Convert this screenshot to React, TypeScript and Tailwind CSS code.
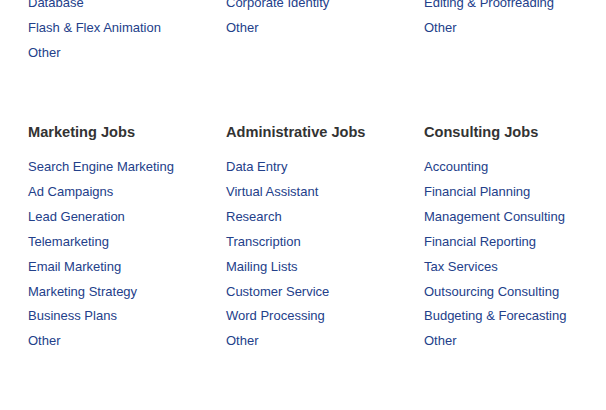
import React from "react";

const top = [
  ["Database", "Flash & Flex Animation", "Other"],
  ["Corporate Identity", "Other"],
  ["Editing & Proofreading", "Other"],
];

const sections = [
  {
    title: "Marketing Jobs",
    items: ["Search Engine Marketing", "Ad Campaigns", "Lead Generation", "Telemarketing", "Email Marketing", "Marketing Strategy", "Business Plans", "Other"],
  },
  {
    title: "Administrative Jobs",
    items: ["Data Entry", "Virtual Assistant", "Research", "Transcription", "Mailing Lists", "Customer Service", "Word Processing", "Other"],
  },
  {
    title: "Consulting Jobs",
    items: ["Accounting", "Financial Planning", "Management Consulting", "Financial Reporting", "Tax Services", "Outsourcing Consulting", "Budgeting & Forecasting", "Other"],
  },
];

export default function App() {
  return (
    <div className="w-[606px] h-[410px] overflow-hidden bg-white pl-[28px]" style={{ fontFamily: '"Liberation Sans", Arial, sans-serif' }}>
      <div className="grid grid-cols-[198px_198px_182px] mt-[-10px]">
        {top.map((col, i) => (
          <ul key={i} className="flex flex-col">
            {col.map((t) => (
              <li key={t} className="text-[13px] leading-[25px] text-[#23408a] whitespace-nowrap">{t}</li>
            ))}
          </ul>
        ))}
      </div>
      <div className="grid grid-cols-[198px_198px_182px] mt-[57px]">
        {sections.map((s) => (
          <div key={s.title} className="flex flex-col">
            <h3 className="text-[14.6px] leading-[20px] font-bold text-[#333333] mb-[13px] whitespace-nowrap">{s.title}</h3>
            <ul className="flex flex-col">
              {s.items.map((t) => (
                <li key={t} className="text-[13px] leading-[24.9px] text-[#23408a] whitespace-nowrap">{t}</li>
              ))}
            </ul>
          </div>
        ))}
      </div>
    </div>
  );
}
